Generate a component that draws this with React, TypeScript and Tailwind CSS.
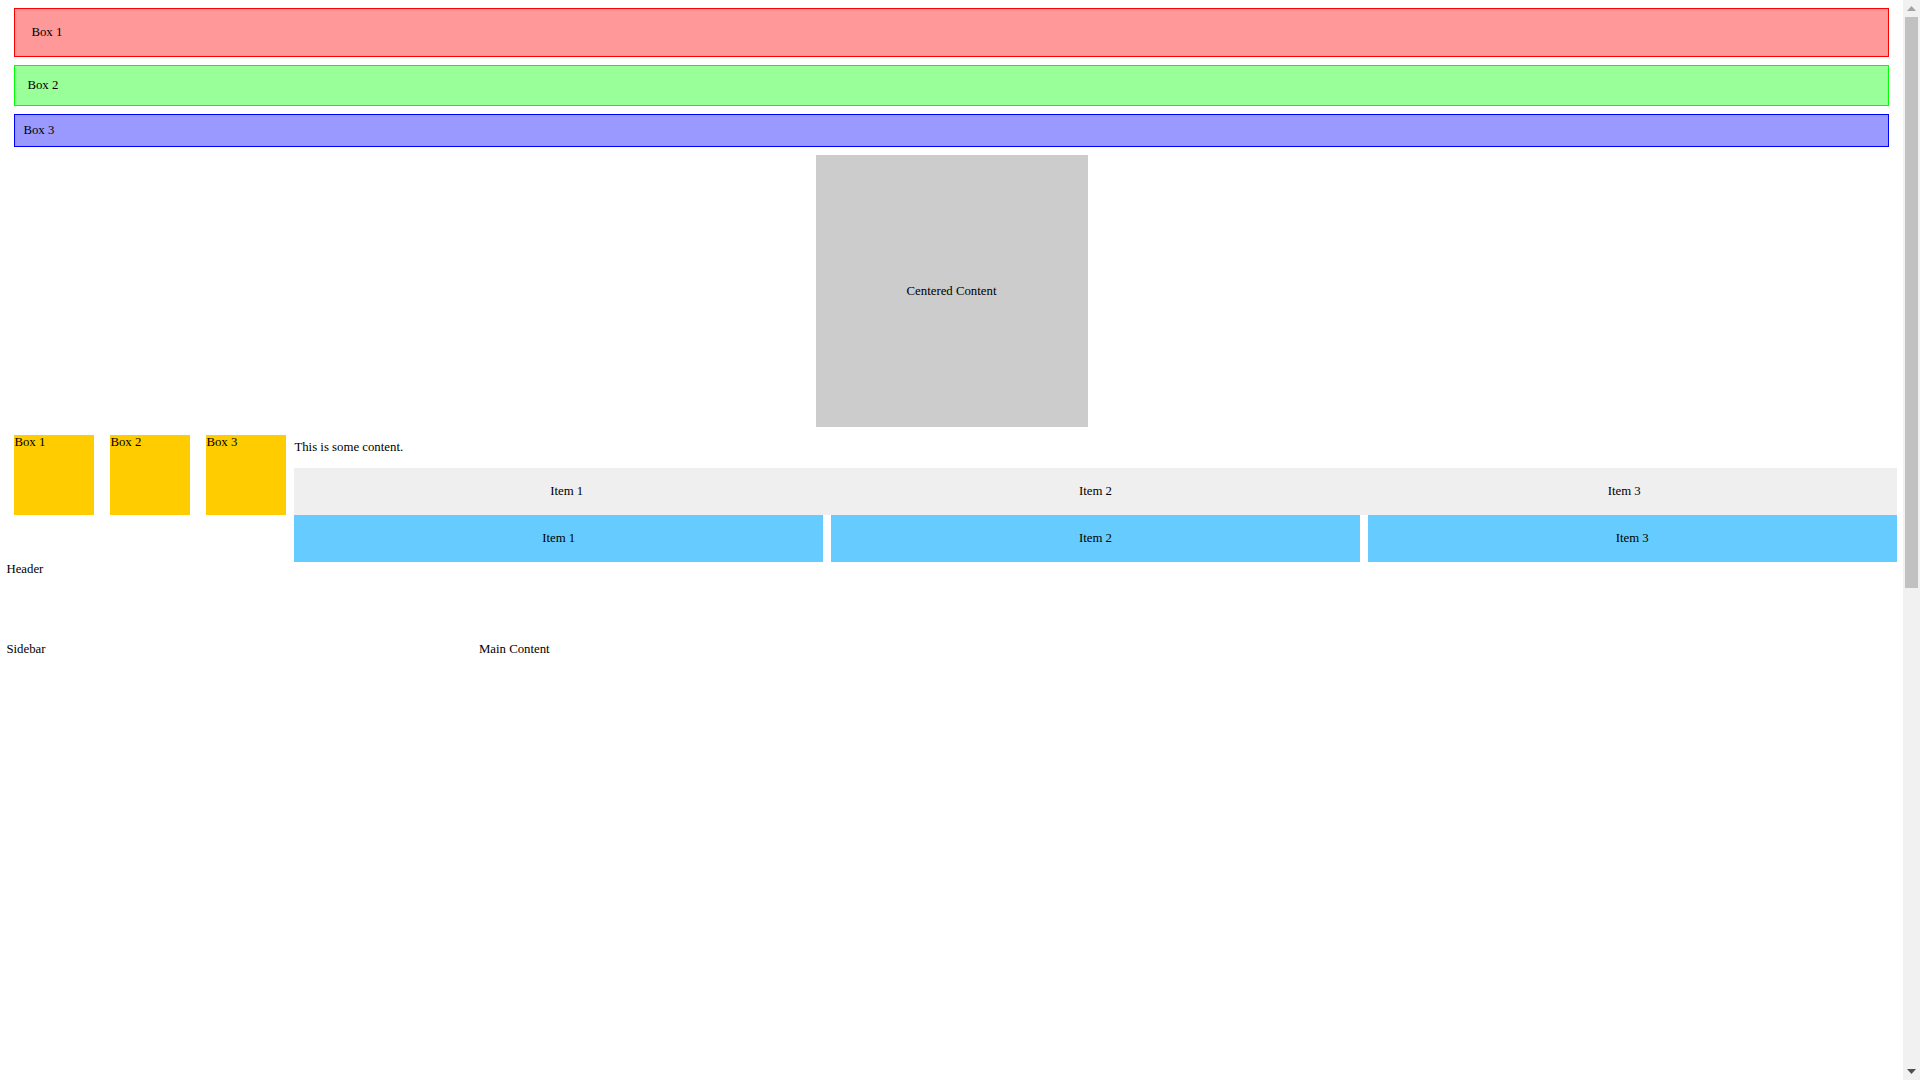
import React from "react";

function FakeScrollbar() {
  return (
    <div className="fixed right-0 top-0 flex h-[1080px] w-[17px] flex-col items-center bg-[#f1f1f1]">
      <div className="flex h-[17px] w-full items-center justify-center">
        <svg width="9" height="5" viewBox="0 0 9 5">
          <path d="M4.5 0 L9 5 L0 5 Z" fill="#a3a3a3" />
        </svg>
      </div>
      <div className="h-[571px] w-[13px] bg-[#c1c1c1]" />
      <div className="flex-1" />
      <div className="flex h-[17px] w-full items-center justify-center">
        <svg width="9" height="5" viewBox="0 0 9 5">
          <path d="M0 0 L9 0 L4.5 5 Z" fill="#505050" />
        </svg>
      </div>
    </div>
  );
}

export default function App() {
  return (
    <div className="bg-white font-['Liberation_Serif','Times_New_Roman',serif] text-[12.8px] leading-[normal] text-black">
      <div className="w-[1903px] px-[6.4px] pt-[8px] pb-[6.4px]">
        <div className="mx-[8px] border border-[#ff0000] bg-[#ff9999] p-[16px]">Box 1</div>
        <div className="mx-[8px] mt-[8px] border border-[#00ff00] bg-[#99ff99] p-[12px]">Box 2</div>
        <div className="mx-[8px] mt-[8px] border border-[#0000ff] bg-[#9999ff] p-[8px]">Box 3</div>

        <div className="mt-[8px] flex justify-center">
          <div className="flex h-[272px] w-[272px] items-center justify-center bg-[#cccccc]">
            Centered Content
          </div>
        </div>

        <div className="flex items-start">
          <div className="flex shrink-0 gap-[16px] px-[8px] pt-[8px]">
            <div className="h-[80px] w-[80px] bg-[#ffcc00]">Box 1</div>
            <div className="h-[80px] w-[80px] bg-[#ffcc00]">Box 2</div>
            <div className="h-[80px] w-[80px] bg-[#ffcc00]">Box 3</div>
          </div>
          <div className="min-w-0 flex-1">
            <p className="my-[12.8px]">This is some content.</p>
            <div className="flex bg-[#efefef] p-[8px]">
              <div className="flex-1 p-[8px] text-center">Item 1</div>
              <div className="flex-1 p-[8px] text-center">Item 2</div>
              <div className="flex-1 p-[8px] text-center">Item 3</div>
            </div>
            <div className="grid grid-cols-3 gap-[8px]">
              <div className="bg-[#66ccff] p-[16px] text-center">Item 1</div>
              <div className="bg-[#66ccff] p-[16px] text-center">Item 2</div>
              <div className="bg-[#66ccff] p-[16px] text-center">Item 3</div>
            </div>
          </div>
        </div>

        <div className="grid h-[1410px] grid-cols-[1fr_3fr] grid-rows-[80px_1fr]">
          <div className="col-span-2">Header</div>
          <div>Sidebar</div>
          <div>Main Content</div>
        </div>
      </div>
      <FakeScrollbar />
    </div>
  );
}
